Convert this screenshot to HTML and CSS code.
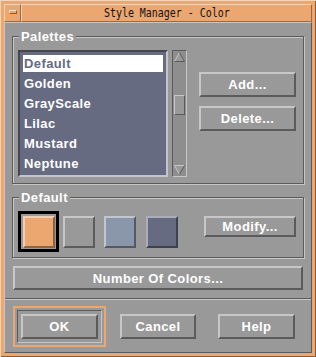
FILE: index.html
```html
<!doctype html>
<html>
	<head>
		<link rel="stylesheet" href="styles.css">
	</head>
	<body>
		<div class="window">
			<!-- Barra de título -->
			<div class="titlebar">
				<div class="menu-btn"><span class="menu-bar"></span></div>
				<div class="title"><span class="title-text">Style Manager - Color</span></div>
			</div>
			<div class="client">
				<!-- Paletas -->
				<fieldset class="group palettes">
					<legend>Palettes</legend>
					<div class="list-row">
						<ul class="list">
							<li class="selected">Default</li>
							<li>Golden</li>
							<li>GrayScale</li>
							<li>Lilac</li>
							<li>Mustard</li>
							<li>Neptune</li>
						</ul>
						<div class="scrollbar">
							<svg class="arrow" viewBox="0 0 13 12" width="13" height="12">
								<polygon points="6.5,1.5 11.5,10.5 1.5,10.5" fill="#999"/>
								<polyline points="1.5,10.5 6.5,1.5" fill="none" stroke="#c7c7c7" stroke-width="1"/>
								<polyline points="6.5,1.5 11.5,10.5 1.5,10.5" fill="none" stroke="#5b5b5b" stroke-width="1"/>
							</svg>
							<div class="trough"><div class="thumb"></div></div>
							<svg class="arrow" viewBox="0 0 13 12" width="13" height="12">
								<polygon points="1.5,1.5 11.5,1.5 6.5,10.5" fill="#999"/>
								<polyline points="11.5,1.5 1.5,1.5 6.5,10.5" fill="none" stroke="#c7c7c7" stroke-width="1"/>
								<polyline points="11.5,1.5 6.5,10.5" fill="none" stroke="#5b5b5b" stroke-width="1"/>
							</svg>
						</div>
						<div class="side">
							<button class="btn">Add...</button>
							<button class="btn">Delete...</button>
						</div>
					</div>
				</fieldset>
				<!-- Colores de la paleta -->
				<fieldset class="group current">
					<legend>Default</legend>
					<div class="swatch-row">
						<div class="swatch-sel"><div class="swatch orange"></div></div>
						<div class="swatch gray s2"></div>
						<div class="swatch steel s3"></div>
						<div class="swatch slate s4"></div>
						<button class="btn modify">Modify...</button>
					</div>
				</fieldset>
				<button class="btn wide">Number Of Colors...</button>
				<div class="separator"></div>
				<!-- Botones de acción -->
				<div class="actions">
					<div class="default-ring">
						<div class="default-well"><button class="btn action">OK</button></div>
					</div>
					<button class="btn action cancel">Cancel</button>
					<button class="btn action help">Help</button>
				</div>
			</div>
		</div>
	</body>
</html>
```

FILE: styles.css
```css
/* Estilos generales */
* {
	margin: 0px;
	padding: 0px;
	box-sizing: border-box;
}
body {
	width: 316px;
	height: 357px;
	overflow: hidden;
	background: #999999;
	font-family: "Liberation Sans", Arial, sans-serif;
}
/* Marco de ventana */
.window {
	width: 316px;
	height: 357px;
	padding: 4px;
	background: #eca66f;
	display: flex;
	flex-direction: column;
	box-shadow: inset 1px 1px 0 #f9d3b1, inset -1px -1px 0 #8a5b36;
}
.titlebar {
	height: 18px;
	display: flex;
}
.menu-btn {
	width: 17px;
	border: 1px solid;
	border-color: #f9d3b1 #9c6a42 #9c6a42 #f9d3b1;
	display: flex;
	align-items: center;
	justify-content: center;
}
.menu-bar {
	width: 8px;
	height: 4px;
	margin-bottom: 2px;
	border: 1px solid;
	border-color: #fbe0c8 #8a5b36 #8a5b36 #fbe0c8;
}
.title {
	flex: 1;
	border: 1px solid;
	border-color: #f9d3b1 #9c6a42 #9c6a42 #f9d3b1;
	text-align: center;
	font-family: "DejaVu Sans Mono", monospace;
	font-size: 12px;
	line-height: 16px;
	color: #111111;
}
.title-text {
	display: inline-block;
	transform: scaleX(0.83); /* fuente fija estrecha */
}
/* Área de cliente */
.client {
	flex: 1;
	background: #999999;
	border: 1px solid;
	border-color: #c7c7c7 #5b5b5b #5b5b5b #c7c7c7;
	padding: 6px 7px 5px;
	display: flex;
	flex-direction: column;
}
.group {
	border: 1px solid #5b5b5b;
	box-shadow: inset 1px 1px 0 #c7c7c7, 1px 1px 0 #c7c7c7;
	padding: 6px 7px 6px 5px;
	min-width: 0;
}
.group legend {
	margin-left: 1px;
	padding: 0 2px;
	background: #999999;
	color: white;
	font-weight: bold;
	font-size: 13px;
	line-height: 15px;
	letter-spacing: 0.4px;
}
.current {
	margin-top: 6px;
	padding: 6px 7px 5px 5px;
}
/* Lista de paletas */
.list-row {
	display: flex;
	align-items: flex-start;
}
.list {
	list-style-type: none;
	width: 150px;
	height: 127px;
	padding: 3px 3px 0;
	background: #666b81;
	border: 2px solid;
	border-color: #45474f #c2c5cf #c2c5cf #45474f;
}
.list li {
	height: 17px;
	line-height: 17px;
	margin-bottom: 3px;
	padding-left: 1px;
	color: white;
	font-weight: bold;
	font-size: 13px;
	letter-spacing: 0.4px;
}
.list li.selected {
	background: white;
	color: #666b81;
}
.scrollbar {
	width: 15px;
	height: 127px;
	margin-left: 4px;
	background: #8e8e8e;
	border: 1px solid;
	border-color: #5b5b5b #c7c7c7 #c7c7c7 #5b5b5b;
	display: flex;
	flex-direction: column;
}
.arrow {
	display: block;
}
.trough {
	flex: 1;
	padding-top: 32px;
}
.thumb {
	width: 11px;
	height: 20px;
	margin-left: 1px;
	background: #999999;
	border: 1px solid;
	border-color: #c7c7c7 #5b5b5b #5b5b5b #c7c7c7;
}
.side {
	display: flex;
	flex-direction: column;
	gap: 9px;
	margin-left: 12px;
	margin-top: 22px;
}
/* Botones */
.btn {
	background: #999999;
	border: 2px solid;
	border-color: #c7c7c7 #5b5b5b #5b5b5b #c7c7c7;
	color: white;
	font-family: "Liberation Sans", Arial, sans-serif;
	font-weight: bold;
	font-size: 13px;
	line-height: 1;
	letter-spacing: 0.4px;
	padding: 0;
}
.side .btn {
	width: 97px;
	height: 25px;
}
/* Muestras de color */
.swatch-row {
	display: flex;
	align-items: flex-start;
}
.swatch-sel {
	width: 41px;
	height: 41px;
	border: 3px solid black;
	display: flex;
	align-items: center;
	justify-content: center;
}
.swatch {
	width: 32px;
	height: 32px;
	border: 2px solid;
	border-color: rgba(255,255,255,0.45) rgba(0,0,0,0.4) rgba(0,0,0,0.4) rgba(255,255,255,0.45);
}
.orange { background: #eca66f; }
.gray { background: #999999; }
.steel { background: #8a97aa; }
.slate { background: #666b81; }
.s2 { margin: 5px 0 0 4px; }
.s3 { margin: 5px 0 0 9px; }
.s4 { margin: 5px 0 0 10px; }
.modify {
	width: 92px;
	height: 21px;
	margin-left: auto;
	margin-top: 5px;
}
.wide {
	height: 24px;
	margin: 8px 1px 0;
}
.separator {
	height: 2px;
	margin: 8px -7px 0;
	border-top: 1px solid #5b5b5b;
	border-bottom: 1px solid #c7c7c7;
}
.actions {
	display: flex;
	align-items: center;
	margin: 6px 0 0 1px;
}
.default-ring {
	border: 2px solid #eca66f;
	padding: 2px;
}
.default-well {
	border: 1px solid;
	border-color: #5b5b5b #c7c7c7 #c7c7c7 #5b5b5b;
	padding: 3px;
}
.action {
	display: block;
	width: 77px;
	height: 25px;
}
.cancel {
	width: 76px;
	margin-left: 14px;
}
.help {
	margin-left: 22px;
}
```
